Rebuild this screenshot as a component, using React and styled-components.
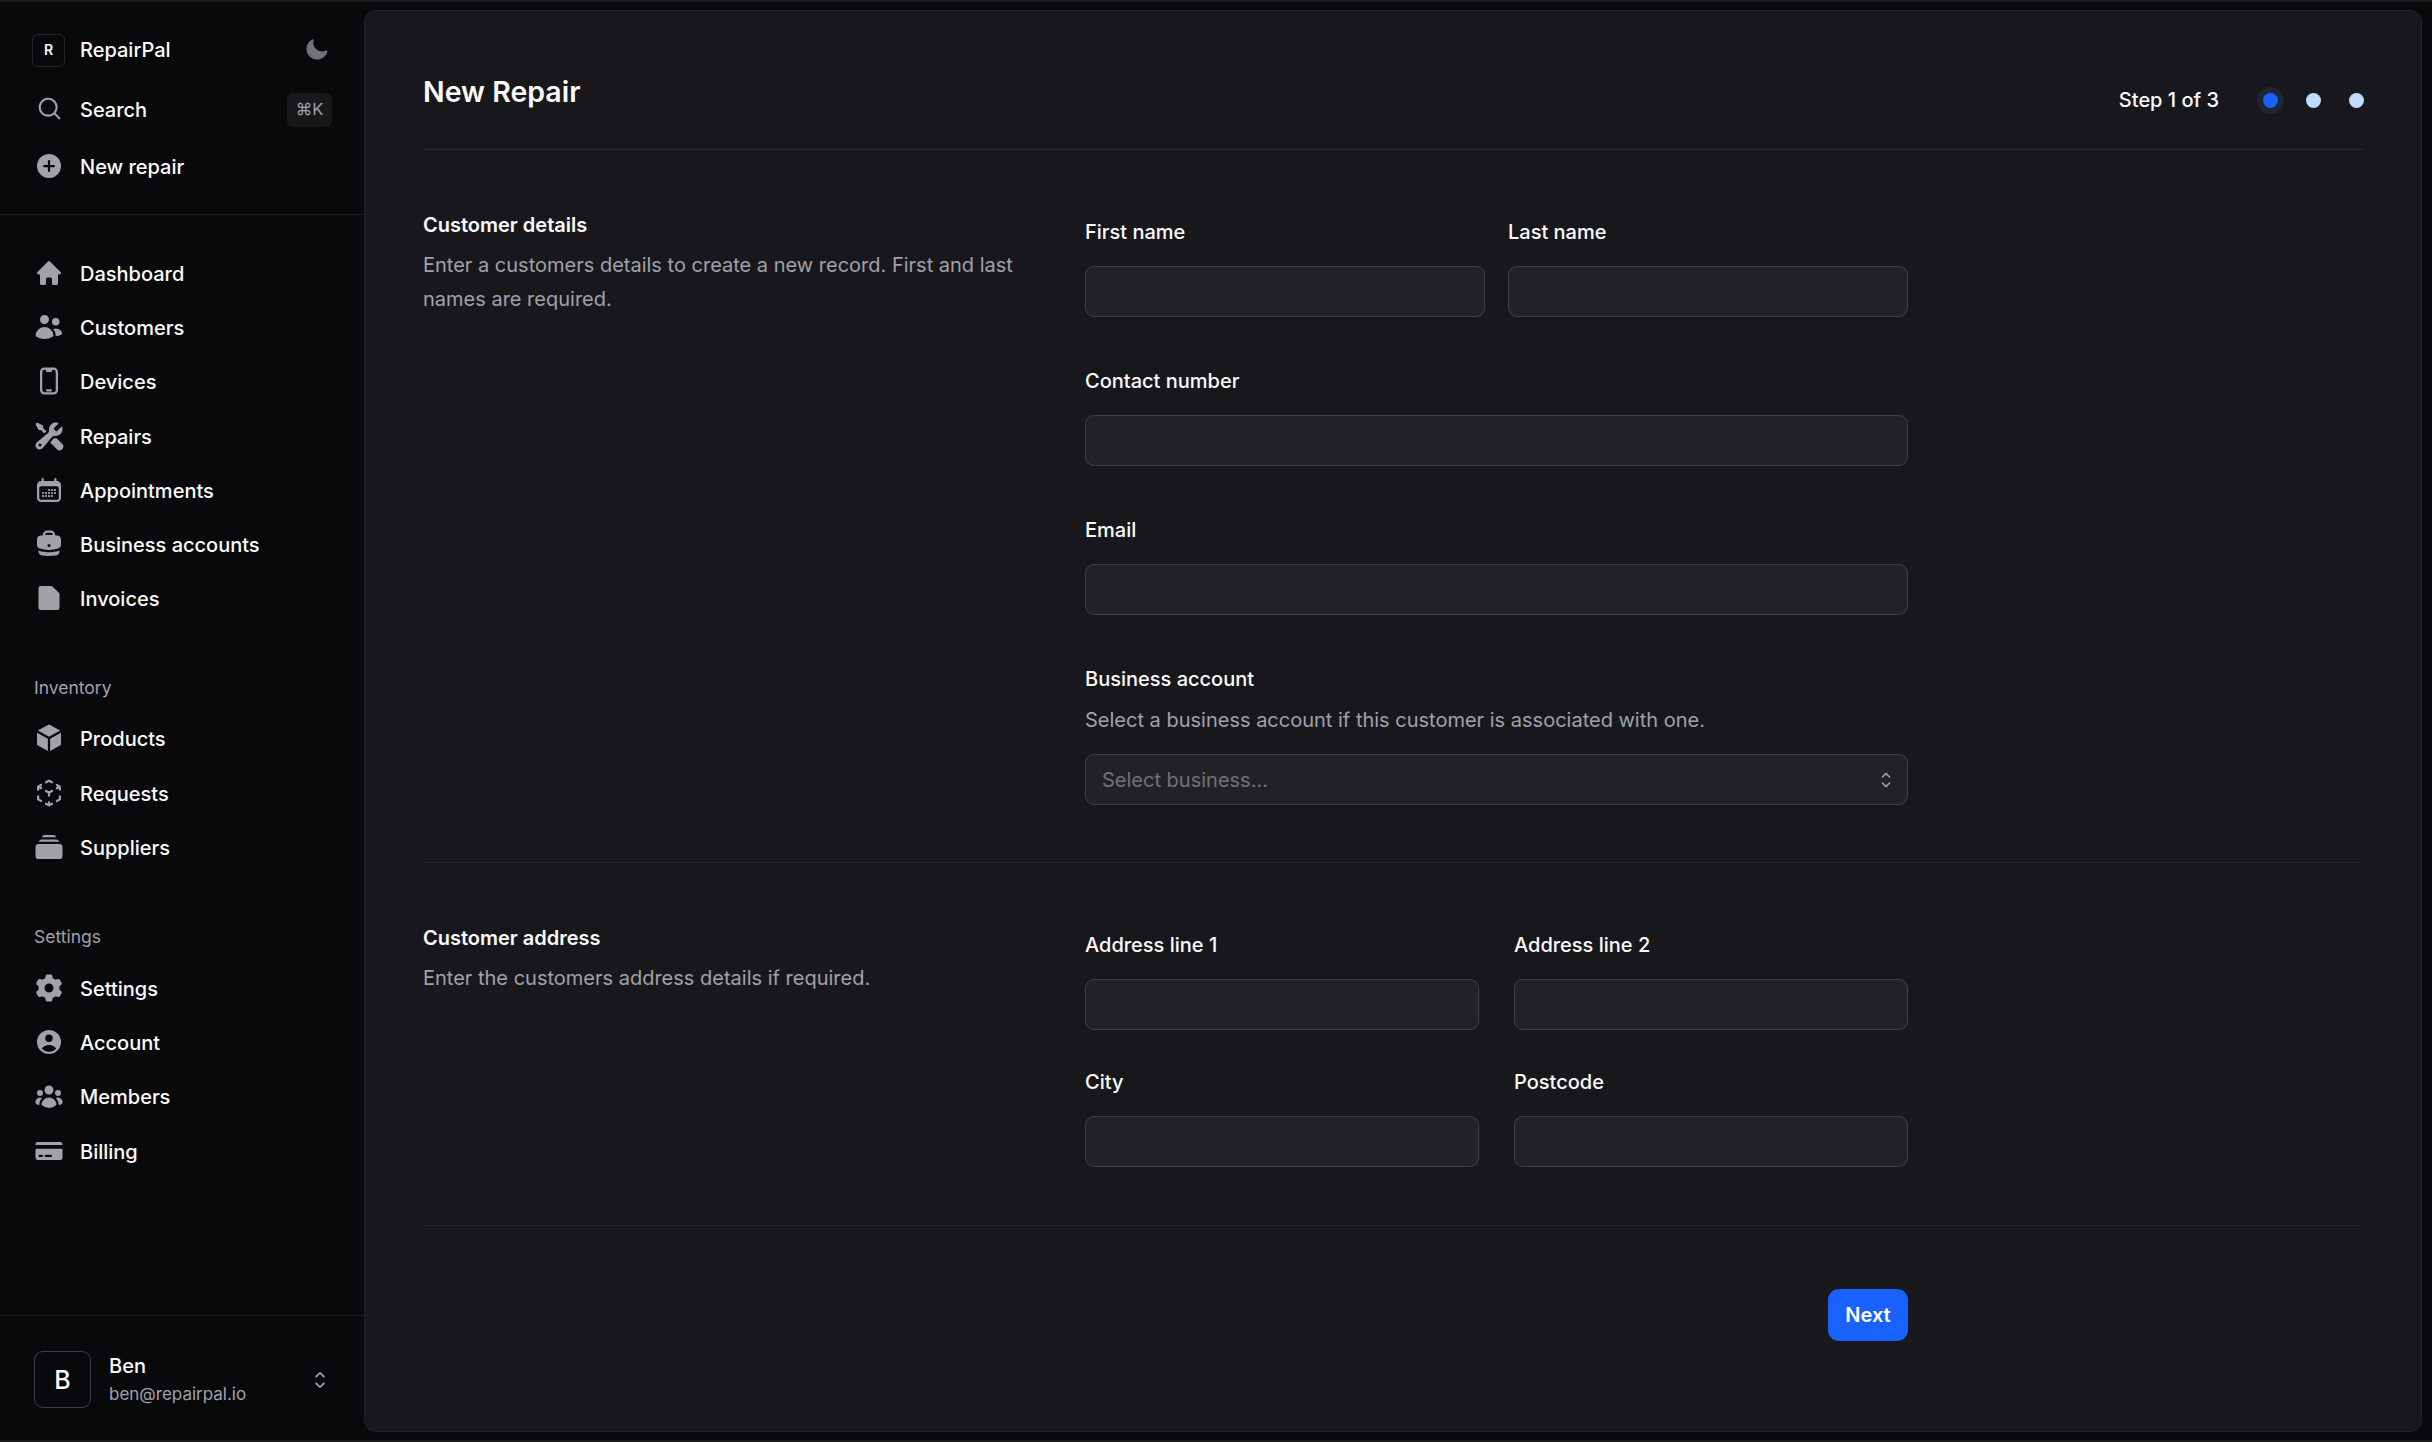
import React from "react";
import styled, { createGlobalStyle } from "styled-components";
import {
  HiMiniMoon,
  HiMiniMagnifyingGlass,
  HiMiniPlusCircle,
  HiMiniHome,
  HiMiniUsers,
  HiMiniDevicePhoneMobile,
  HiMiniWrenchScrewdriver,
  HiMiniCalendarDays,
  HiMiniBriefcase,
  HiMiniDocument,
  HiMiniCube,
  HiMiniCubeTransparent,
  HiMiniRectangleStack,
  HiMiniCog6Tooth,
  HiMiniUserCircle,
  HiMiniUserGroup,
  HiMiniCreditCard,
  HiMiniChevronUpDown,
} from "react-icons/hi2";

const GlobalStyle = createGlobalStyle`
  html, body {
    margin: 0;
    padding: 0;
    background: #09090b;
  }
  * {
    box-sizing: border-box;
  }
  body {
    font-family: Inter, "Liberation Sans", sans-serif;
    -webkit-font-smoothing: antialiased;
  }
`;

const Shell = styled.div`
  display: flex;
  width: 2432px;
  height: 1442px;
  border-top: 2px solid #1c1c1f;
  border-bottom: 2px solid #1c1c1f;
  background: #09090b;
  overflow: hidden;
`;

const Sidebar = styled.aside`
  width: 364px;
  flex: none;
  display: flex;
  flex-direction: column;
`;

const SideTop = styled.div`
  height: 213px;
  flex: none;
  padding: 29px 32px 0;
  border-bottom: 1px solid #1c1c1f;
`;

const SideBody = styled.nav`
  flex: 1;
  padding: 32px 32px 0;
`;

const NavRow = styled.div`
  display: flex;
  align-items: center;
  height: ${(p) => p.$h || 54.2}px;
  margin-top: ${(p) => p.$top || 0}px;
  color: #fafafa;
  font-size: 20px;
  font-weight: 500;
  line-height: 1;

  svg {
    width: 30px;
    height: 30px;
    flex: none;
    margin: 0 16px 2px 2px;
    color: #a1a1aa;
  }
`;

const SearchIcon = styled(HiMiniMagnifyingGlass)`
  && {
    width: 27px;
    height: 27px;
    margin: 0 17.5px 2px 3.5px;
  }
`;

const LogoBox = styled.div`
  width: 33px;
  height: 33px;
  flex: none;
  margin-right: 15px;
  display: flex;
  align-items: center;
  justify-content: center;
  border: 1px solid #27272a;
  border-radius: 6px;
  font-size: 14px;
  font-weight: 600;
`;

const RowEnd = styled.div`
  margin-left: auto;
  display: flex;
  align-items: center;
`;

const Moon = styled(RowEnd)`
  svg {
    width: 25px;
    height: 25px;
    margin: 0 3px 2px 0;
    color: #71717a;
  }
`;

const Kbd = styled(RowEnd)`
  width: 45px;
  height: 34px;
  justify-content: center;
  border-radius: 6px;
  background: #18181b;
  color: #a1a1aa;
  font-size: 16.5px;
  font-weight: 400;
`;

const Group = styled.div`
  margin-top: ${(p) => p.$top}px;
`;

const GroupLabel = styled.div`
  height: 30px;
  display: flex;
  align-items: center;
  padding-left: 2px;
  color: #a1a1aa;
  font-size: 17.5px;
  font-weight: 400;
  margin-bottom: 10px;
`;

const SideFooter = styled.div`
  height: 125px;
  flex: none;
  display: flex;
  align-items: center;
  padding: 3px 32px 0 34px;
  border-top: 1px solid #1c1c1f;
`;

const Avatar = styled.div`
  width: 57px;
  height: 57px;
  flex: none;
  display: flex;
  align-items: center;
  justify-content: center;
  margin-right: 18px;
  border: 1.5px solid #3f3f46;
  border-radius: 9px;
  color: #fafafa;
  font-size: 25px;
  font-weight: 500;
`;

const UserInfo = styled.div`
  flex: 1;
`;

const UserName = styled.div`
  color: #fafafa;
  font-size: 20px;
  font-weight: 500;
  line-height: 28px;
`;

const UserMail = styled.div`
  color: #a1a1aa;
  font-size: 17px;
  line-height: 28px;
`;

const UserToggle = styled.div`
  display: flex;
  color: #a1a1aa;

  svg {
    width: 24px;
    height: 24px;
  }
`;

const Main = styled.main`
  flex: 1;
  margin: 8px 10px 8px 0;
  padding: 0 58px;
  background: #18181c;
  border: 1px solid #232326;
  border-radius: 12px;
`;

const Header = styled.header`
  height: 139px;
  display: flex;
  justify-content: space-between;
  border-bottom: 1px solid #2a2a2e;
`;

const Title = styled.h1`
  margin: 61px 0 0;
  color: #fafafa;
  font-size: 28.5px;
  font-weight: 600;
  line-height: 40px;
`;

const Stepper = styled.div`
  margin: 69px -1px 0 0;
  height: 40px;
  display: flex;
  align-items: center;
`;

const StepText = styled.span`
  color: #fafafa;
  font-size: 20px;
  font-weight: 500;
  margin-right: 44px;
`;

const Dot = styled.span`
  width: 15px;
  height: 15px;
  margin-left: ${(p) => (p.$first ? 0 : 28)}px;
  border-radius: 50%;
  background: ${(p) => (p.$active ? "#1a62ff" : "#bfdbfe")};
  box-shadow: ${(p) => (p.$active ? "0 0 0 6px #1e2533" : "none")};
`;

const Section = styled.section`
  display: grid;
  grid-template-columns: 662px 823px;
  height: ${(p) => p.$h}px;
  padding-top: 58px;
  border-bottom: 1px solid #232326;
`;

const SectionTitle = styled.h2`
  margin: 0;
  color: #fafafa;
  font-size: 20px;
  font-weight: 600;
  line-height: 34px;
`;

const Muted = styled.p`
  margin: ${(p) => p.$top || 0}px 0 0;
  color: #a1a1aa;
  font-size: 20px;
  font-weight: 400;
  line-height: 34px;
  max-width: 600px;
`;

const Fields = styled.div`
  padding-top: 7px;
`;

const FieldRow = styled.div`
  display: grid;
  grid-template-columns: 1fr 1fr;
  column-gap: ${(p) => p.$gap}px;
  margin-top: ${(p) => p.$top || 0}px;
`;

const Field = styled.div`
  margin-top: ${(p) => p.$top || 0}px;
`;

const Label = styled.label`
  display: block;
  margin-bottom: 17px;
  color: #fafafa;
  font-size: 20px;
  font-weight: 500;
  line-height: 34px;
`;

const Input = styled.input`
  display: block;
  width: 100%;
  height: 51px;
  background: #222226;
  border: 1.5px solid #3f3f46;
  border-radius: 9px;
  outline: none;
`;

const Hint = styled(Muted)`
  margin: -10px 0 17px;
  max-width: none;
`;

const SelectBox = styled.div`
  height: 51px;
  display: flex;
  align-items: center;
  justify-content: space-between;
  padding: 0 10px 0 16px;
  background: #222226;
  border: 1.5px solid #3f3f46;
  border-radius: 9px;
  color: #71717a;
  font-size: 20px;

  svg {
    width: 22px;
    height: 22px;
    color: #a1a1aa;
  }
`;

const Footer = styled.div`
  width: 1485px;
  display: flex;
  justify-content: flex-end;
  padding-top: 63px;
`;

const NextButton = styled.button`
  width: 80px;
  height: 52px;
  padding: 0;
  border: none;
  border-radius: 11px;
  background: #1a62ff;
  color: #fff;
  font-family: inherit;
  font-size: 20px;
  font-weight: 600;
`;

const mainNav = [
  [HiMiniHome, "Dashboard"],
  [HiMiniUsers, "Customers"],
  [HiMiniDevicePhoneMobile, "Devices"],
  [HiMiniWrenchScrewdriver, "Repairs"],
  [HiMiniCalendarDays, "Appointments"],
  [HiMiniBriefcase, "Business accounts"],
  [HiMiniDocument, "Invoices"],
];

const inventoryNav = [
  [HiMiniCube, "Products"],
  [HiMiniCubeTransparent, "Requests"],
  [HiMiniRectangleStack, "Suppliers"],
];

const settingsNav = [
  [HiMiniCog6Tooth, "Settings"],
  [HiMiniUserCircle, "Account"],
  [HiMiniUserGroup, "Members"],
  [HiMiniCreditCard, "Billing"],
];

const NavList = ({ items }) =>
  items.map(([Icon, text]) => (
    <NavRow key={text}>
      <Icon />
      {text}
    </NavRow>
  ));

export default function App() {
  return (
    <>
      <GlobalStyle />
      <Shell>
        <Sidebar>
          <SideTop>
            <NavRow $h={38}>
              <LogoBox>R</LogoBox>
              RepairPal
              <Moon>
                <HiMiniMoon />
              </Moon>
            </NavRow>
            <NavRow $h={57} $top={12}>
              <SearchIcon />
              Search
              <Kbd>⌘K</Kbd>
            </NavRow>
            <NavRow $h={57}>
              <HiMiniPlusCircle />
              New repair
            </NavRow>
          </SideTop>
          <SideBody>
            <NavList items={mainNav} />
            <Group $top={46}>
              <GroupLabel>Inventory</GroupLabel>
              <NavList items={inventoryNav} />
            </Group>
            <Group $top={47}>
              <GroupLabel>Settings</GroupLabel>
              <NavList items={settingsNav} />
            </Group>
          </SideBody>
          <SideFooter>
            <Avatar>B</Avatar>
            <UserInfo>
              <UserName>Ben</UserName>
              <UserMail>ben@repairpal.io</UserMail>
            </UserInfo>
            <UserToggle>
              <HiMiniChevronUpDown />
            </UserToggle>
          </SideFooter>
        </Sidebar>
        <Main>
          <Header>
            <Title>New Repair</Title>
            <Stepper>
              <StepText>Step 1 of 3</StepText>
              <Dot $first $active />
              <Dot />
              <Dot />
            </Stepper>
          </Header>
          <Section $h={713}>
            <div>
              <SectionTitle>Customer details</SectionTitle>
              <Muted $top={6}>
                Enter a customers details to create a new record. First and last
                names are required.
              </Muted>
            </div>
            <Fields>
              <FieldRow $gap={23}>
                <Field>
                  <Label>First name</Label>
                  <Input />
                </Field>
                <Field>
                  <Label>Last name</Label>
                  <Input />
                </Field>
              </FieldRow>
              <Field $top={47}>
                <Label>Contact number</Label>
                <Input />
              </Field>
              <Field $top={47}>
                <Label>Email</Label>
                <Input />
              </Field>
              <Field $top={47}>
                <Label>Business account</Label>
                <Hint>Select a business account if this customer is associated with one.</Hint>
                <SelectBox>
                  Select business...
                  <HiMiniChevronUpDown />
                </SelectBox>
              </Field>
            </Fields>
          </Section>
          <Section $h={363}>
            <div>
              <SectionTitle>Customer address</SectionTitle>
              <Muted $top={6}>Enter the customers address details if required.</Muted>
            </div>
            <Fields>
              <FieldRow $gap={35}>
                <Field>
                  <Label>Address line 1</Label>
                  <Input />
                </Field>
                <Field>
                  <Label>Address line 2</Label>
                  <Input />
                </Field>
              </FieldRow>
              <FieldRow $gap={35} $top={35}>
                <Field>
                  <Label>City</Label>
                  <Input />
                </Field>
                <Field>
                  <Label>Postcode</Label>
                  <Input />
                </Field>
              </FieldRow>
            </Fields>
          </Section>
          <Footer>
            <NextButton>Next</NextButton>
          </Footer>
        </Main>
      </Shell>
    </>
  );
}
